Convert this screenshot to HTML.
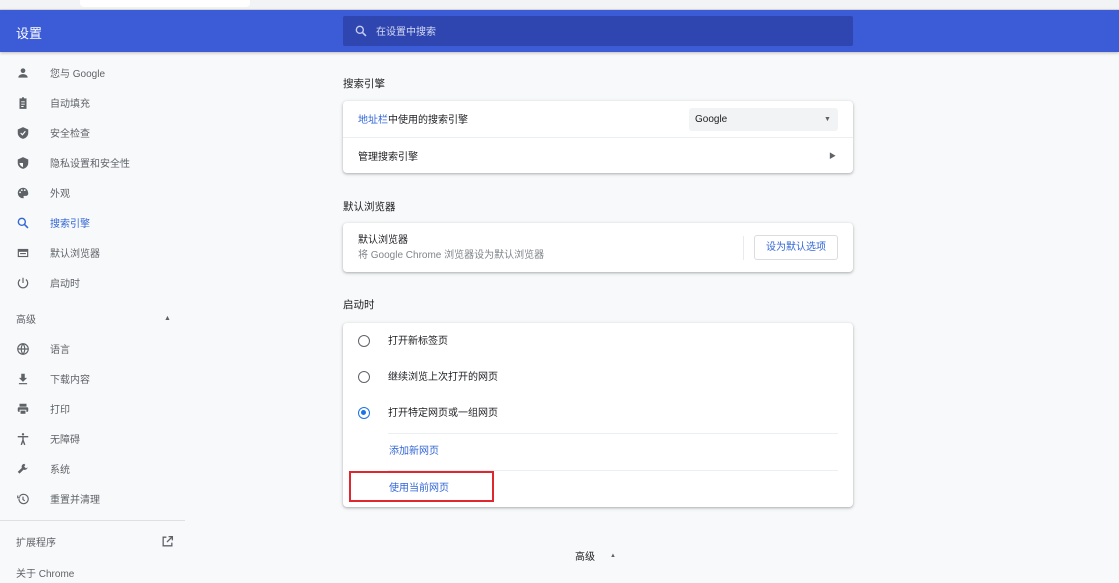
<!DOCTYPE html>
<html><head><meta charset="utf-8"><style>
*{box-sizing:border-box;margin:0;padding:0}
body{width:1119px;height:583px;overflow:hidden;background:#f8f9fa;font-family:"Liberation Sans","Noto Sans CJK SC",sans-serif;font-size:10px;line-height:14px;color:#202124;position:relative}
.a{position:absolute}
.top{left:0;top:0;width:1119px;height:10px;background:#f1f3f4;border-bottom:1px solid #ddd}
.hdr{left:0;top:10px;width:1119px;height:42px;background:#3c5bd6;box-shadow:0 1px 3px rgba(0,0,0,.25)}
.srch{left:343px;top:16px;width:510px;height:30px;background:#2f46b0;border-radius:2px}
.nav{left:50px;color:#5f6368;font-size:10px}
.card{left:343px;width:510px;background:#fff;border-radius:4px;box-shadow:0 1px 2px rgba(60,64,67,.3),0 1px 3px 1px rgba(60,64,67,.1)}
.h{left:343px;font-size:10.5px;color:#202124}
.radio{width:12px;height:12px;border:1.6px solid #5f6368;border-radius:50%}
</style></head><body>
<div class="a top"><div class="a" style="left:80px;top:0;width:170px;height:7px;background:#fff;border-radius:0 0 4px 4px"></div></div>
<div class="a hdr"></div>
<div class="a" style="left:16px;top:26px;color:#fff;font-size:13px;line-height:15px">设置</div>
<div class="a srch">
<svg class="a" style="left:11px;top:8px" width="14" height="14" viewBox="0 0 24 24"><circle cx="10" cy="10" r="6" fill="none" stroke="#c5cdf0" stroke-width="2.4"/><path d="M14.5 14.5l6 6" stroke="#c5cdf0" stroke-width="2.6"/></svg>
<div class="a" style="left:33px;top:10px;color:#d5dbf5;font-size:10px">在设置中搜索</div>
</div>

<svg class="a" style="left:16px;top:66px" width="14" height="14" viewBox="0 0 24 24"><circle cx="12" cy="8" r="4" fill="#5f6368"/><path d="M4 20c0-4 4-6 8-6s8 2 8 6z" fill="#5f6368"/></svg>
<div class="a nav" style="top:68px">您与 Google</div>
<svg class="a" style="left:16px;top:96px" width="14" height="14" viewBox="0 0 24 24"><path d="M6 4h4l1-2h2l1 2h4v18H6z" fill="#5f6368"/><path d="M9 10h6M9 14h6M9 18h4" stroke="#fff" stroke-width="1.6"/></svg>
<div class="a nav" style="top:98px">自动填充</div>
<svg class="a" style="left:16px;top:126px" width="14" height="14" viewBox="0 0 24 24"><path d="M12 2l9 4v6c0 5-4 9-9 10-5-1-9-5-9-10V6z" fill="#5f6368"/><path d="M8 12l3 3 5-6" stroke="#fff" stroke-width="2" fill="none"/></svg>
<div class="a nav" style="top:128px">安全检查</div>
<svg class="a" style="left:16px;top:156px" width="14" height="14" viewBox="0 0 24 24"><path d="M12 2l9 4v6c0 5-4 9-9 10-5-1-9-5-9-10V6z" fill="#5f6368"/><path d="M12 5v7H6c0 3 3 6 6 7z" fill="#fff"/></svg>
<div class="a nav" style="top:158px">隐私设置和安全性</div>
<svg class="a" style="left:16px;top:186px" width="14" height="14" viewBox="0 0 24 24"><path d="M12 3a9 9 0 000 18c1.5 0 1.5-1 1-2-.6-1 0-2 1.5-2H17a4 4 0 004-4c0-6-4-10-9-10z" fill="#5f6368"/><circle cx="7" cy="11" r="1.5" fill="#fff"/><circle cx="10" cy="7" r="1.5" fill="#fff"/><circle cx="15" cy="7" r="1.5" fill="#fff"/></svg>
<div class="a nav" style="top:188px">外观</div>
<svg class="a" style="left:16px;top:216px" width="14" height="14" viewBox="0 0 24 24"><circle cx="10" cy="10" r="6" fill="none" stroke="#3367d6" stroke-width="2.4"/><path d="M14.5 14.5l6 6" stroke="#3367d6" stroke-width="2.6"/></svg>
<div class="a nav" style="top:218px;color:#3367d6">搜索引擎</div>
<svg class="a" style="left:16px;top:246px" width="14" height="14" viewBox="0 0 24 24"><rect x="3" y="5" width="18" height="14" fill="#5f6368"/><rect x="5" y="10" width="14" height="7" fill="#fff"/><path d="M7 13h10" stroke="#5f6368" stroke-width="2"/></svg>
<div class="a nav" style="top:248px">默认浏览器</div>
<svg class="a" style="left:16px;top:276px" width="14" height="14" viewBox="0 0 24 24"><path d="M12 3v9" stroke="#5f6368" stroke-width="2"/><path d="M7 6a8 8 0 1010 0" fill="none" stroke="#5f6368" stroke-width="2"/></svg>
<div class="a nav" style="top:278px">启动时</div>
<div class="a nav" style="left:16px;top:314px">高级</div>
<div class="a" style="left:164px;top:315px;color:#5f6368;font-size:7px;line-height:7px">▲</div>
<svg class="a" style="left:16px;top:342px" width="14" height="14" viewBox="0 0 24 24"><circle cx="12" cy="12" r="9" fill="none" stroke="#5f6368" stroke-width="2"/><path d="M3 12h18M12 3c-4 5-4 13 0 18M12 3c4 5 4 13 0 18" fill="none" stroke="#5f6368" stroke-width="2"/></svg>
<div class="a nav" style="top:344px">语言</div>
<svg class="a" style="left:16px;top:372px" width="14" height="14" viewBox="0 0 24 24"><path d="M9 3h6v7h4l-7 7-7-7h4z" fill="#5f6368"/><path d="M5 20h14" stroke="#5f6368" stroke-width="2"/></svg>
<div class="a nav" style="top:374px">下载内容</div>
<svg class="a" style="left:16px;top:402px" width="14" height="14" viewBox="0 0 24 24"><rect x="6" y="3" width="12" height="5" fill="#5f6368"/><rect x="3" y="9" width="18" height="8" rx="2" fill="#5f6368"/><rect x="7" y="14" width="10" height="7" fill="#5f6368" stroke="#fff" stroke-width="1.5"/></svg>
<div class="a nav" style="top:404px">打印</div>
<svg class="a" style="left:16px;top:432px" width="14" height="14" viewBox="0 0 24 24"><circle cx="12" cy="4" r="2" fill="#5f6368"/><path d="M3 8h18M12 8v6M12 14l-3 8M12 14l3 8" stroke="#5f6368" stroke-width="2.4"/></svg>
<div class="a nav" style="top:434px">无障碍</div>
<svg class="a" style="left:16px;top:462px" width="14" height="14" viewBox="0 0 24 24"><path d="M14 3a5 5 0 00-4 7L3 17l3 3 7-7a5 5 0 007-4l-3 2-3-3 2-3z" fill="#5f6368"/></svg>
<div class="a nav" style="top:464px">系统</div>
<svg class="a" style="left:16px;top:492px" width="14" height="14" viewBox="0 0 24 24"><path d="M5 12a8 8 0 108-8 8 8 0 00-7 4" fill="none" stroke="#5f6368" stroke-width="2"/><path d="M3 6v4h4" fill="none" stroke="#5f6368" stroke-width="2"/><path d="M12 8v5l3 2" fill="none" stroke="#5f6368" stroke-width="2"/></svg>
<div class="a nav" style="top:494px">重置并清理</div>
<div class="a" style="left:0;top:520px;width:185px;height:1px;background:#e0e0e0"></div>
<div class="a nav" style="left:16px;top:537px">扩展程序</div>
<svg class="a" style="left:161px;top:535px" width="13" height="13" viewBox="0 0 24 24"><path d="M10 4H4v16h16v-6" fill="none" stroke="#5f6368" stroke-width="2.4"/><path d="M14 3h7v7M21 3l-10 10" fill="none" stroke="#5f6368" stroke-width="2.4"/></svg>
<div class="a nav" style="left:16px;top:568px">关于 Chrome</div>

<div class="a h" style="top:77px">搜索引擎</div>
<div class="a card" style="top:101px;height:72px">
<div class="a" style="left:15px;top:13px"><span style="color:#3367d6">地址栏</span>中使用的搜索引擎</div>
<div class="a" style="left:346px;top:7px;width:149px;height:23px;background:#f1f3f4;border-radius:3px"><span class="a" style="left:6px;top:5px">Google</span><span class="a" style="left:135px;top:8px;font-size:7px;line-height:7px;color:#5f6368">▼</span></div>
<div class="a" style="left:0;top:36px;width:510px;height:1px;background:#eceff1"></div>
<div class="a" style="left:15px;top:50px">管理搜索引擎</div>
<div class="a" style="left:486px;top:52px;font-size:7px;line-height:7px;color:#5f6368">▶</div>
</div>
<div class="a h" style="top:200px">默认浏览器</div>
<div class="a card" style="top:223px;height:49px">
<div class="a" style="left:15px;top:11px">默认浏览器</div>
<div class="a" style="left:15px;top:26px;color:#80868b">将 Google Chrome 浏览器设为默认浏览器</div>
<div class="a" style="left:400px;top:13px;width:1px;height:24px;background:#e8eaed"></div>
<div class="a" style="left:411px;top:12px;width:84px;height:25px;border:1px solid #dadce0;border-radius:3px;color:#3367d6;text-align:center;line-height:23px">设为默认选项</div>
</div>
<div class="a h" style="top:298px">启动时</div>
<div class="a card" style="top:323px;height:184px">
<div class="a radio" style="left:15px;top:12px"></div><div class="a" style="left:45px;top:12px">打开新标签页</div>
<div class="a radio" style="left:15px;top:48px"></div><div class="a" style="left:45px;top:48px">继续浏览上次打开的网页</div>
<div class="a radio" style="left:15px;top:84px;border-color:#1a73e8"><div class="a" style="left:2px;top:2px;width:5px;height:5px;border-radius:50%;background:#1a73e8"></div></div><div class="a" style="left:45px;top:84px">打开特定网页或一组网页</div>
<div class="a" style="left:45px;top:110px;width:450px;height:1px;background:#eceff1"></div>
<div class="a" style="left:46px;top:122px;color:#3367d6">添加新网页</div>
<div class="a" style="left:45px;top:147px;width:450px;height:1px;background:#eceff1"></div>
<div class="a" style="left:46px;top:159px;color:#3367d6">使用当前网页</div>
</div>
<div class="a" style="left:349px;top:471px;width:145px;height:31px;border:2px solid #e0262f"></div>
<div class="a" style="left:575px;top:551px;color:#202124">高级</div>
<div class="a" style="left:610px;top:553px;font-size:6px;line-height:6px;color:#5f6368">▲</div>
</body></html>
